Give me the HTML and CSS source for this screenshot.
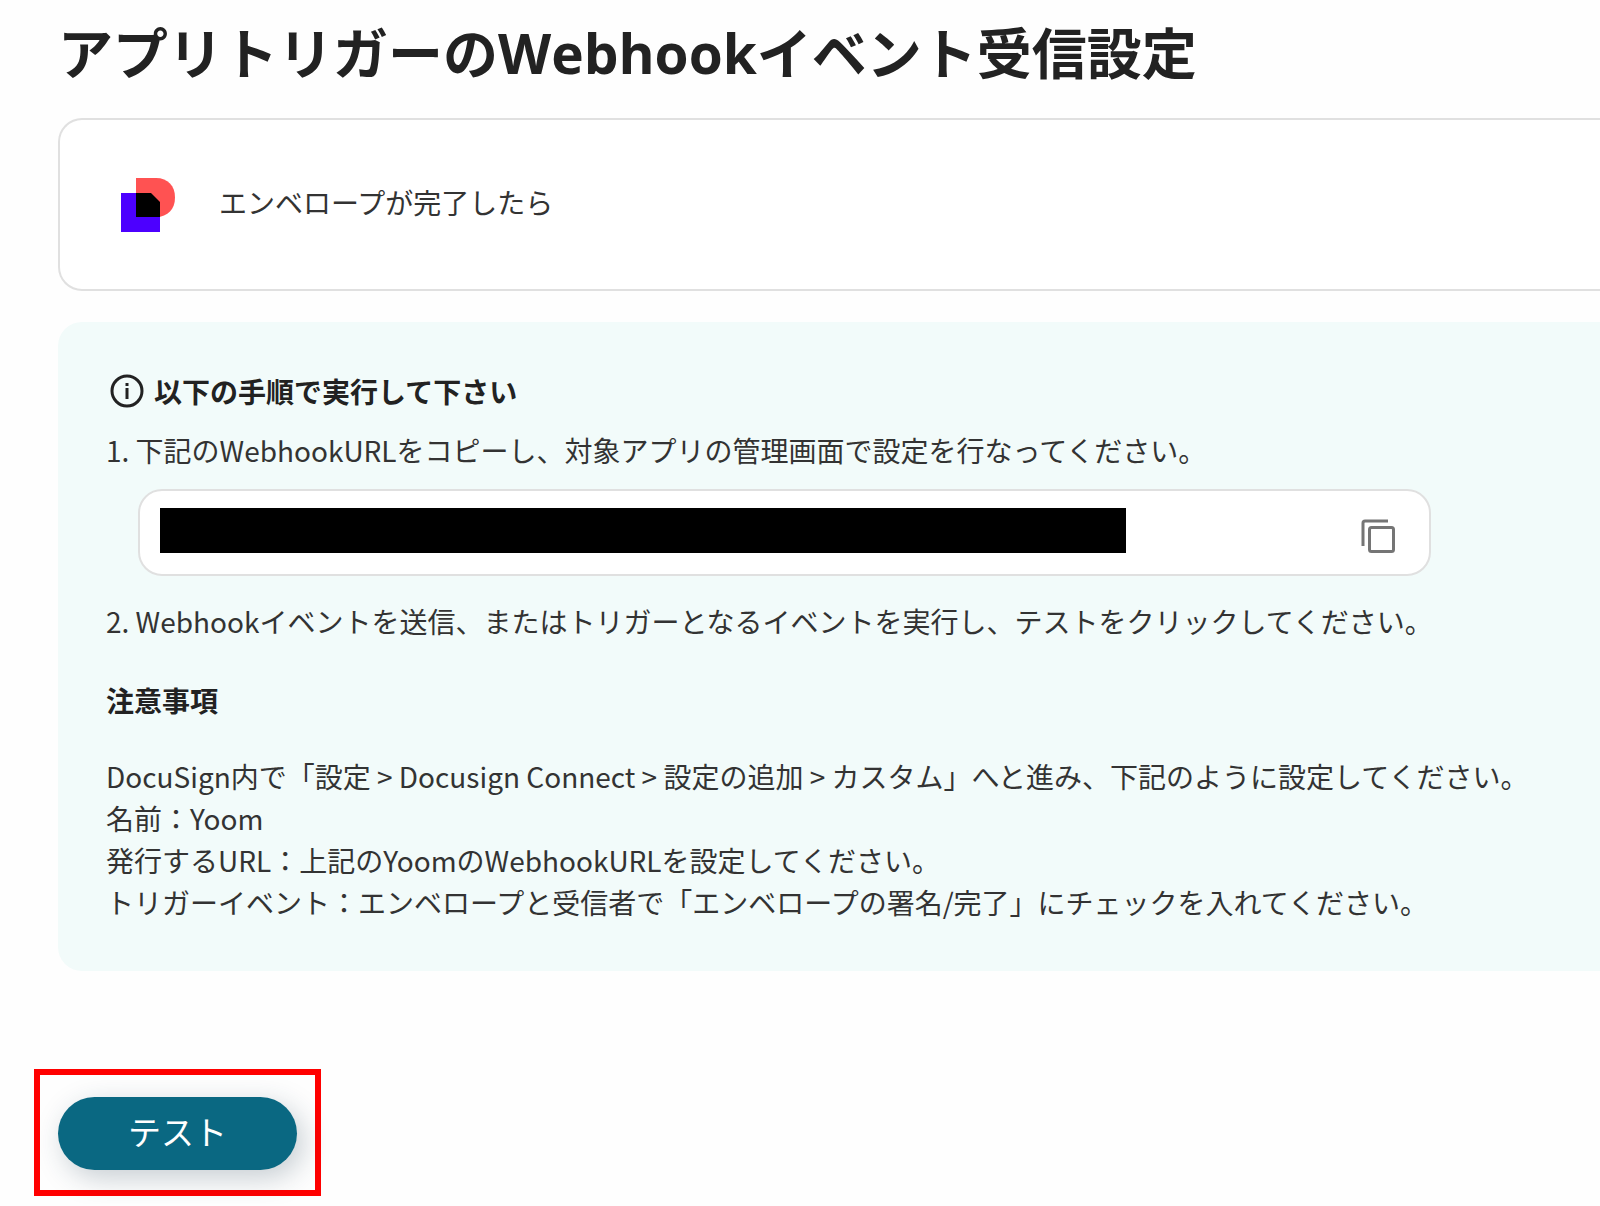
FILE: index.html
```
<!DOCTYPE html>
<html lang="ja">
<head>
    <meta charset="UTF-8">
    <meta name="viewport" content="width=device-width, initial-scale=1.0">
    <title>アプリトリガーのWebhookイベント受信設定</title>
    <link rel="stylesheet" href="styles.css">
</head>
<body>
    <main class="page">
        <h1 class="page-title">アプリトリガーのWebhookイベント受信設定</h1>

        <div class="trigger-card">
            <svg class="app-logo" viewBox="0 0 54 54" aria-hidden="true">
                <path fill="#ff5252" d="M15 0h20c12 0 19 8 19 19.500S47 39 35 39H15z"/>
                <path fill="#4c00ff" d="M0 15h39v39H0z"/>
                <path fill="#ff5252" d="M29 15h10v10z"/>
                <path fill="#000" d="M15 15h15l9 9v15H15z"/>
            </svg>
            <span class="trigger-name">エンベロープが完了したら</span>
        </div>

        <section class="guide">
            <h2 class="guide-title">
                <svg class="info-icon" viewBox="0 0 34 34" aria-hidden="true">
                    <circle cx="17" cy="17" r="15" fill="none" stroke="currentColor" stroke-width="3"/>
                    <path fill="currentColor" d="M15.500 9h3v3h-3zM15.500 14h3v11h-3z"/>
                </svg>
                以下の手順で実行して下さい
            </h2>
            <p class="step">1. 下記のWebhookURLをコピーし、対象アプリの管理画面で設定を行なってください。</p>

            <div class="url-box">
                <input class="url-input" type="text" aria-label="WebhookURL" readonly>
                <button class="copy-button" type="button" aria-label="コピー">
                    <svg viewBox="0 0 34 34" aria-hidden="true">
                        <path d="M27 2H4a2 2 0 0 0-2 2v23"/>
                        <rect x="8.500" y="8.500" width="24" height="24" rx="2"/>
                    </svg>
                </button>
            </div>

            <p class="step">2. Webhookイベントを送信、またはトリガーとなるイベントを実行し、テストをクリックしてください。</p>

            <h3 class="note-title">注意事項</h3>
            <p class="note">
                DocuSign内で「設定 &gt; Docusign Connect &gt; 設定の追加 &gt; カスタム」へと進み、下記のように設定してください。<br>
                名前：Yoom<br>
                発行するURL：上記のYoomのWebhookURLを設定してください。<br>
                トリガーイベント：エンベロープと受信者で「エンベロープの署名/完了」にチェックを入れてください。
            </p>
        </section>

        <!-- 赤枠の強調表示 -->
        <div class="highlight">
            <button class="test-button" type="button">テスト</button>
        </div>
    </main>
</body>
</html>
```
FILE: styles.css
```
* {
    box-sizing: border-box;
}

body {
    margin: 0;
    background-color: #fefefe;
    color: #333333;
    font-family: "Noto Sans CJK JP", sans-serif;
    font-size: 28px;
    line-height: 42px;
}

h1, h2, h3, p {
    margin: 0;
}

/* カードは右端まで続く */
.page {
    padding: 14px 0 8px 58px;
}

.page-title {
    margin-bottom: 26px;
    font-family: "Open Sans", "Noto Sans CJK JP", sans-serif;
    font-size: 55px;
    line-height: 78px;
    color: #222222;
}

.trigger-card {
    display: flex;
    align-items: center;
    gap: 44px;
    padding: 58px 61px 57px;
    border: 2px solid #e0e0e0;
    border-right: none;
    border-radius: 24px 0 0 24px;
    background-color: #ffffff;
}

.app-logo {
    width: 54px;
    height: 54px;
}

.trigger-name {
    padding-bottom: 6px;
}

.guide {
    margin-top: 31px;
    padding: 48px;
    padding-right: 0;
    border-radius: 24px 0 0 24px;
    background-color: #f2fbfa;
}

.guide-title {
    display: flex;
    align-items: center;
    gap: 10px;
    margin-bottom: 17px;
    padding-left: 4px;
    font-size: 28px;
    color: #222222;
}

.info-icon {
    width: 34px;
    height: 34px;
}

.url-box {
    display: flex;
    align-items: center;
    gap: 235px;
    margin: 18px 169px 24px 32px;
    padding: 17px 34px 21px 20px;
    border: 2px solid #e0e0e0;
    border-radius: 24px;
    background-color: #ffffff;
}

.url-input {
    flex: 1;
    min-width: 0;
    height: 45px;
    padding: 0;
    border: none;
    background-color: #000000;
}

.copy-button {
    display: flex;
    margin-top: 10px;
    padding: 0;
    border: none;
    background: none;
    cursor: pointer;
}

.copy-button svg {
    width: 34px;
    height: 34px;
    fill: none;
    stroke: #757575;
    stroke-width: 3;
}

.note-title {
    margin: 37px 0 34px;
    font-size: 28px;
    color: #222222;
}

.highlight {
    width: fit-content;
    margin: 98px 0 0 -24px;
    padding: 22px 18px 20px;
    border: 6px solid #ff0000;
}

.test-button {
    display: block;
    width: 239px;
    height: 73px;
    padding: 0 0 6px;
    border: none;
    border-radius: 37px;
    background-color: #0a6882;
    box-shadow: 6px 8px 28px rgba(30, 60, 80, 0.25);
    color: #ffffff;
    font-family: inherit;
    font-size: 33px;
    cursor: pointer;
}
```
